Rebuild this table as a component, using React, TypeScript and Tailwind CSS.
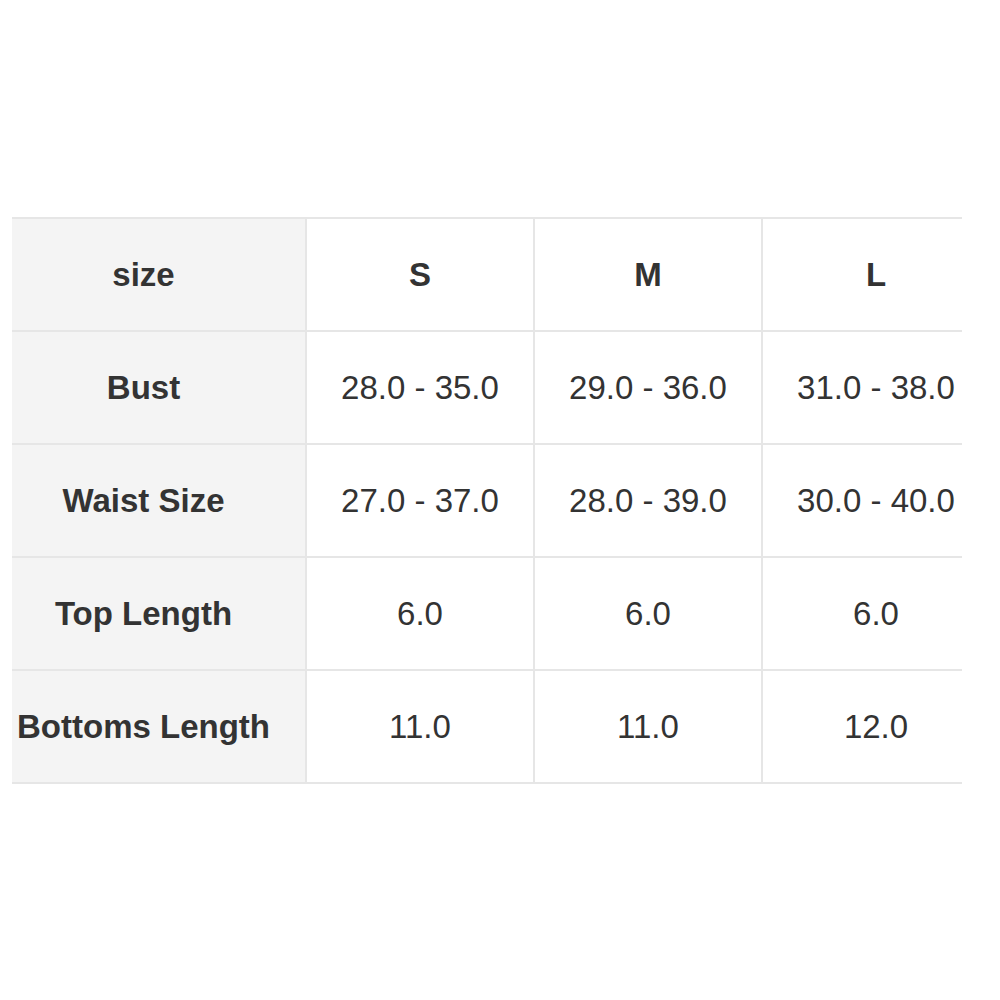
const COLUMNS = ['S', 'M', 'L']

const ROWS: { label: string; values: string[] }[] = [
  { label: 'Bust', values: ['28.0 - 35.0', '29.0 - 36.0', '31.0 - 38.0'] },
  { label: 'Waist Size', values: ['27.0 - 37.0', '28.0 - 39.0', '30.0 - 40.0'] },
  { label: 'Top Length', values: ['6.0', '6.0', '6.0'] },
  { label: 'Bottoms Length', values: ['11.0', '11.0', '12.0'] },
]

function Row({ label, values, head }: { label: string; values: string[]; head?: boolean }) {
  return (
    <div className="flex h-[113px] border-t-2 border-[#e6e6e6]">
      <div className="w-[293px] shrink-0 pr-[30px] bg-[#f4f4f4] flex items-center justify-center font-bold whitespace-nowrap">
        {label}
      </div>
      {values.map((v, i) => (
        <div
          key={i}
          className={
            'w-[228px] shrink-0 border-l-2 border-[#e6e6e6] flex items-center justify-center whitespace-nowrap ' +
            (head ? 'font-bold' : '')
          }
        >
          {v}
        </div>
      ))}
    </div>
  )
}

export default function App() {
  return (
    <div className="w-[1000px] h-[1000px] bg-white pt-[217px] pl-[12px] font-['Liberation_Sans',Arial,sans-serif] text-[33px] text-[#333]">
      <div className="w-[950px] overflow-hidden border-b-2 border-[#e6e6e6]">
        <div className="w-[1000px]">
          <Row label="size" values={COLUMNS} head />
          {ROWS.map(r => (
            <Row key={r.label} label={r.label} values={r.values} />
          ))}
        </div>
      </div>
    </div>
  )
}
